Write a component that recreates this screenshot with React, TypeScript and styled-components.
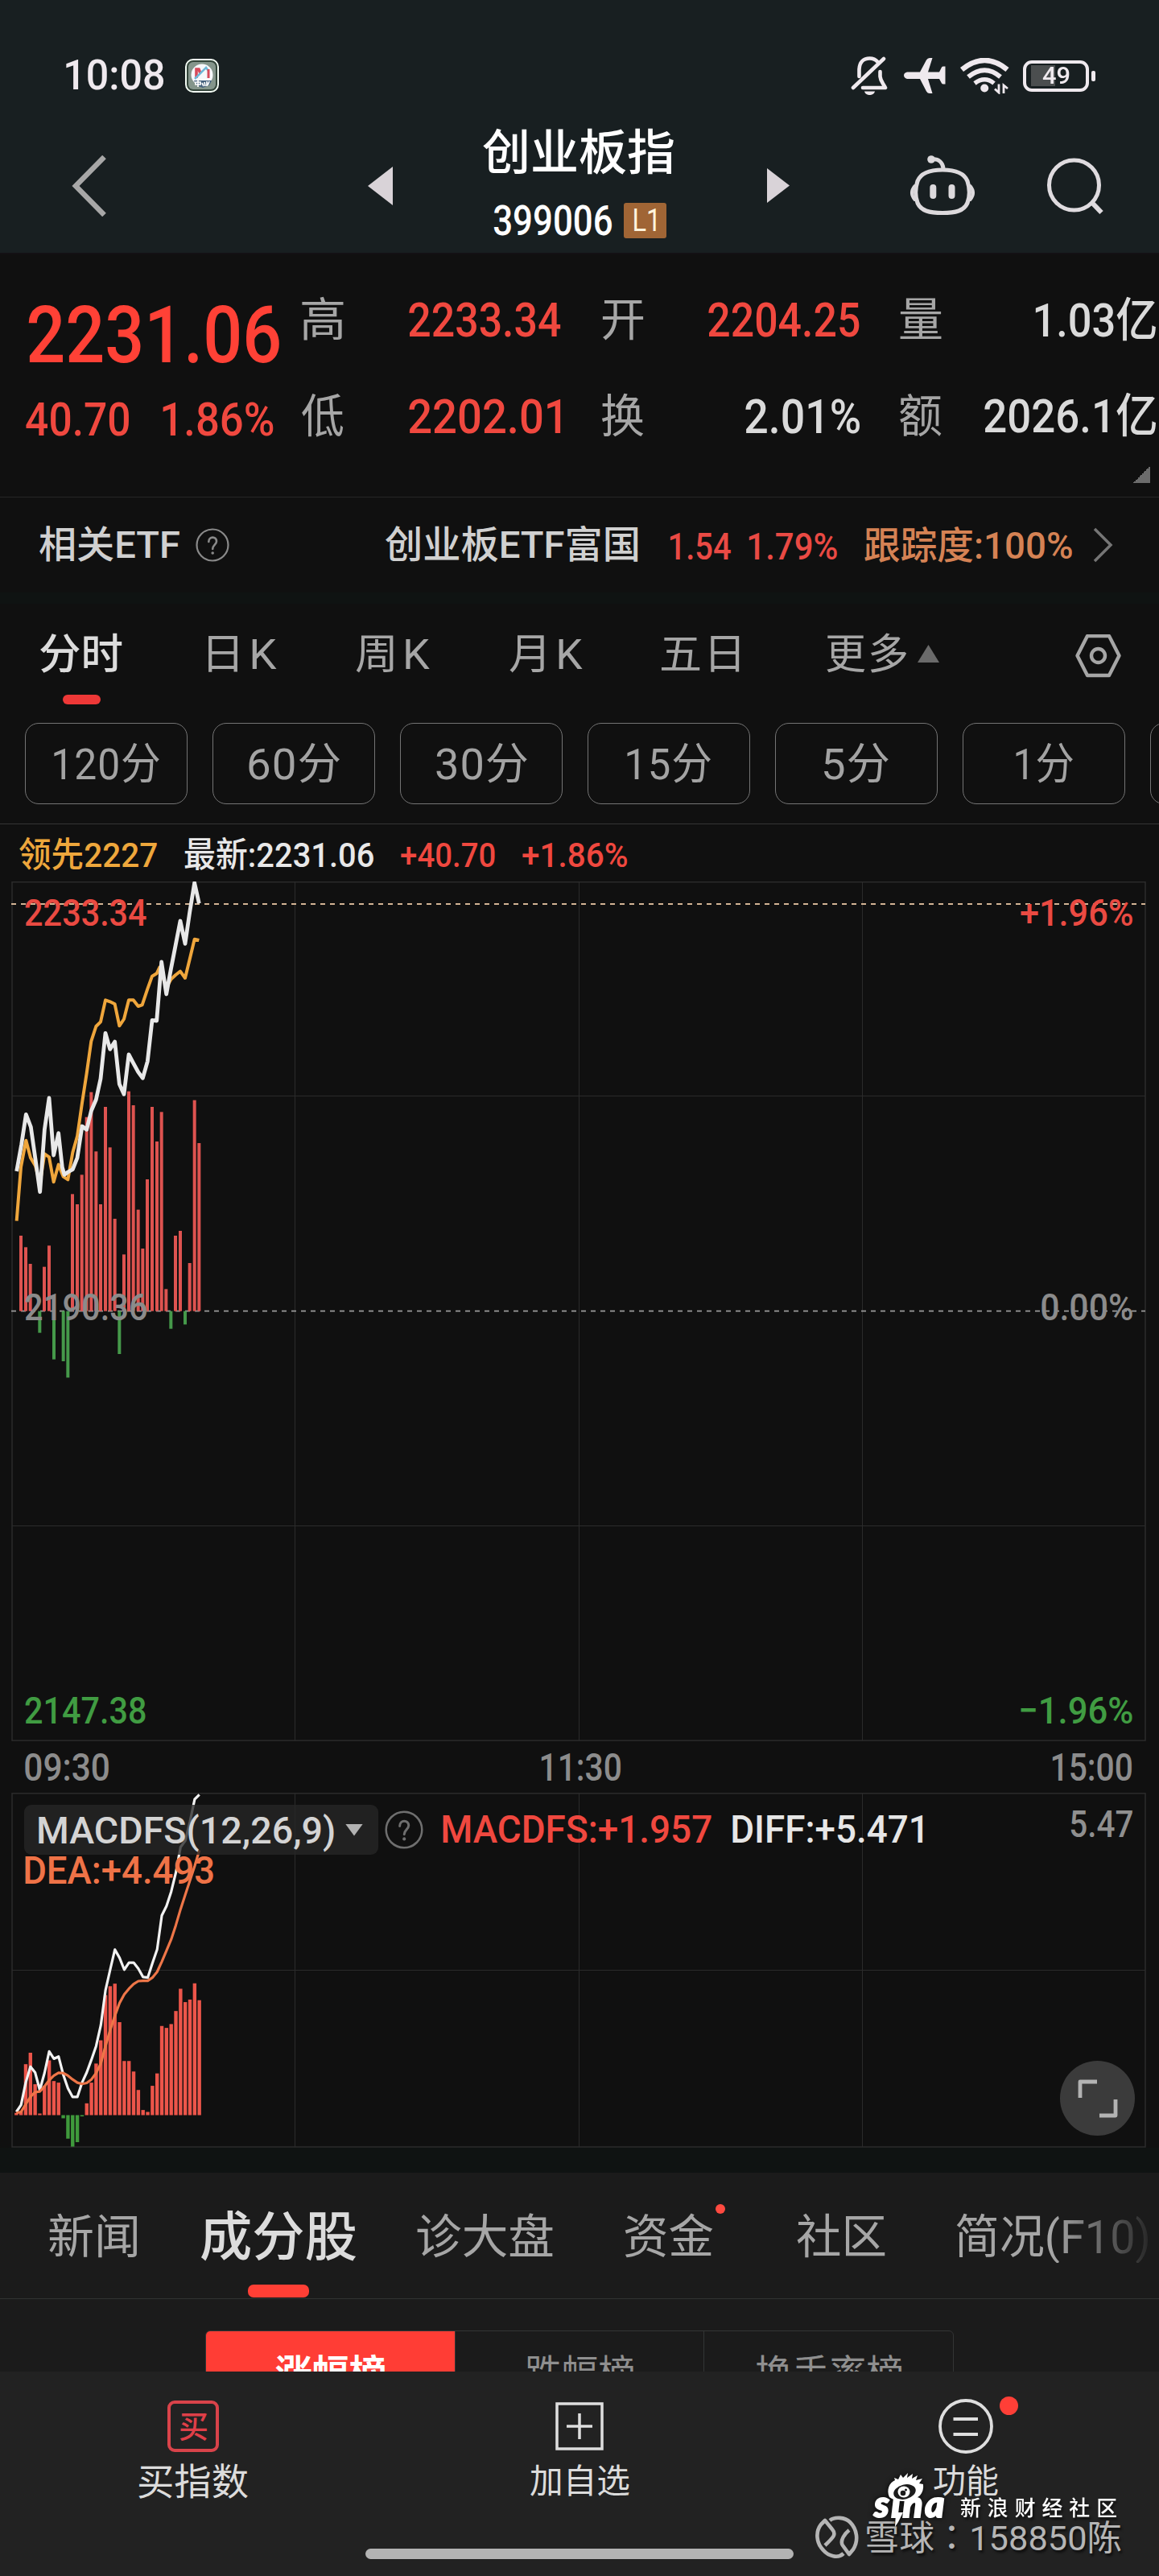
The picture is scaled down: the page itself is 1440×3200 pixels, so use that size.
import React, { useLayoutEffect, useRef, useState } from "react";
import styled, { createGlobalStyle } from "styled-components";

const FONT = 'Roboto, "Noto Sans CJK SC", sans-serif';
const FONT_TC = 'Roboto, "Noto Sans CJK TC", sans-serif';

const Global = createGlobalStyle`
  * { box-sizing: border-box; }
  html, body { margin: 0; padding: 0; background: #101010; }
  body { width: 1440px; overflow-x: hidden; font-family: ${FONT}; }
  svg { display: block; flex: none; }
`;

/* ---------- text that fills an exact ink width ---------- */

type TextProps = {
  w: number;
  size: number;
  color?: string;
  weight?: number;
  ml?: number;
  mt?: number;
  spacing?: number;
  line?: number;
  shadow?: boolean;
  family?: string;
  children: string;
};

const TextBox = styled.span<{ $w: number; $ml: number; $mt: number; $line: number }>`
  display: block;
  flex: none;
  width: ${(p) => p.$w}px;
  height: ${(p) => p.$line}px;
  margin-left: ${(p) => p.$ml}px;
  margin-top: ${(p) => p.$mt}px;
`;

const TextInk = styled.span<{
  $size: number;
  $color: string;
  $weight: number;
  $spacing: number;
  $line: number;
  $shadow: boolean;
  $family: string;
}>`
  display: inline-block;
  vertical-align: top;
  transform-origin: 0 50%;
  white-space: nowrap;
  font-family: ${(p) => p.$family};
  font-size: ${(p) => p.$size}px;
  font-weight: ${(p) => p.$weight};
  line-height: ${(p) => p.$line}px;
  letter-spacing: ${(p) => p.$spacing}px;
  color: ${(p) => p.$color};
  text-shadow: ${(p) => (p.$shadow ? "2px 3px 3px rgba(0,0,0,.6)" : "none")};
`;

function Text({
  w, size, color = "#d0d0d0", weight = 400, ml = 0, mt = 0, spacing = 0, line, shadow = false, family = FONT, children,
}: TextProps) {
  const ref = useRef<HTMLSpanElement>(null);
  const [fit, setFit] = useState("none");
  useLayoutEffect(() => {
    const ctx = document.createElement("canvas").getContext("2d") as any;
    if (!ctx || !ref.current) return;
    ctx.font = `${weight} ${size}px ${family}`;
    ctx.letterSpacing = `${spacing}px`;
    const m = ctx.measureText(children);
    const scale = w / (m.actualBoundingBoxLeft + m.actualBoundingBoxRight);
    setFit(`translateX(${m.actualBoundingBoxLeft * scale}px) scaleX(${scale})`);
  }, [w, size, weight, spacing, family, children]);
  const lh = line ?? size;
  return (
    <TextBox $w={w} $ml={ml} $mt={mt} $line={lh}>
      <TextInk
        ref={ref}
        $size={size}
        $color={color}
        $weight={weight}
        $spacing={spacing}
        $line={lh}
        $shadow={shadow}
        $family={family}
        style={{ transform: fit }}
      >
        {children}
      </TextInk>
    </TextBox>
  );
}

/* ---------- page ---------- */

const Page = styled.main`
  position: relative;
  width: 1440px;
  height: 3200px;
  overflow: hidden;
  background: #101010;
  display: flex;
  flex-direction: column;
`;

const Header = styled.header`
  height: 314px;
  flex: none;
  background: #181f21;
`;

const StatusBar = styled.div`
  display: flex;
  align-items: center;
  height: 124px;
  padding: 64px 79px 0 82px;
`;

const AppBadge = styled.div`
  width: 42px;
  height: 42px;
  margin-left: 27px;
`;

const StatusIcons = styled.div`
  display: flex;
  align-items: center;
  margin-left: auto;
`;

const Battery = styled.div`
  display: flex;
  align-items: center;
  margin-left: 17px;
`;

const BatteryShell = styled.div`
  display: flex;
  align-items: center;
  justify-content: center;
  width: 82px;
  height: 39px;
  border: 4px solid #efe9ee;
  border-radius: 11px;
  background: linear-gradient(#4b4e4f, #4b4e4f) 6px center / 30px 26px no-repeat;
`;

const BatteryTip = styled.div`
  width: 5px;
  height: 13px;
  margin-left: 3px;
  border-radius: 2px;
  background: #efe9ee;
`;

const Nav = styled.nav`
  display: flex;
  align-items: center;
  height: 190px;
  padding-top: 23px;
`;

const Gap = styled.div<{ $w: number }>`
  flex: none;
  width: ${(p) => p.$w}px;
`;

const TitleColumn = styled.div`
  align-self: flex-start;
  width: 240px;
  padding-top: 9px;
`;

const CodeRow = styled.div`
  display: flex;
  align-items: center;
  height: 50px;
  margin-top: 23px;
`;

const LevelBadge = styled.div`
  display: flex;
  align-items: center;
  justify-content: center;
  width: 53px;
  height: 44px;
  margin-left: 15px;
  border-radius: 3px;
  background: #a06535;
`;

/* ---------- quote ---------- */

const Quote = styled.section`
  display: flex;
  height: 304px;
  flex: none;
  border-bottom: 1px solid #262626;
  border-top: 2px solid #131114;
`;

const PriceColumn = styled.div`
  width: 375px;
  padding: 51px 0 0 32px;
`;

const ChangeRow = styled.div`
  display: flex;
  align-items: center;
  height: 60px;
  margin-top: 24px;
`;

const StatsColumn = styled.div`
  width: 1061px;
  padding-top: 22px;
`;

const StatsRow = styled.div`
  display: flex;
  justify-content: space-between;
  align-items: center;
  height: 119.5px;
`;

const Stat = styled.div<{ $w: number }>`
  display: flex;
  justify-content: space-between;
  align-items: center;
  width: ${(p) => p.$w}px;
`;

const ExpandCorner = styled.div`
  width: 21px;
  height: 21px;
  margin: 2px 7px 0 auto;
  background: linear-gradient(to bottom right, transparent 50%, #6c6c6c 50%);
`;

const EtfRow = styled.section`
  display: flex;
  align-items: center;
  height: 118px;
  flex: none;
`;

const Band = styled.div<{ $h: number }>`
  height: ${(p) => p.$h}px;
  flex: none;
  background: #0f1312;
`;

/* ---------- period tabs ---------- */

const PeriodTabs = styled.div`
  display: flex;
  align-items: flex-start;
  height: 148px;
  flex: none;
  padding: 38px 0 0 50px;
`;

const Tab = styled.div<{ $ml: number }>`
  position: relative;
  display: flex;
  flex-direction: column;
  align-items: center;
  margin-left: ${(p) => p.$ml}px;
`;

const Underline = styled.div<{ $w: number; $h: number; $mt: number; $color: string }>`
  width: ${(p) => p.$w}px;
  height: ${(p) => p.$h}px;
  margin-top: ${(p) => p.$mt}px;
  border-radius: 7px;
  background: ${(p) => p.$color};
`;

const MoreArrow = styled.div`
  width: 27px;
  height: 22px;
  margin: 13px 0 0 13px;
  background: #6a6a6a;
  clip-path: polygon(50% 0, 100% 100%, 0 100%);
`;

const Chips = styled.div`
  display: flex;
  gap: 31px;
  height: 126px;
  flex: none;
  padding-left: 31px;
  overflow: hidden;
  border-bottom: 1px solid #353535;
`;

const Chip = styled.div`
  display: flex;
  align-items: center;
  justify-content: center;
  flex: none;
  width: 202px;
  height: 101px;
  border: 1px solid #747474;
  border-radius: 17px;
`;

const InfoRow = styled.div`
  display: flex;
  align-items: center;
  height: 71px;
  flex: none;
  padding: 5px 0 0 24px;
`;

/* ---------- charts ---------- */

const Plot = styled.div<{ $h: number }>`
  display: grid;
  width: 1410px;
  height: ${(p) => p.$h}px;
  flex: none;
  margin-left: 14px;
  & > * { grid-area: 1 / 1; }
`;

const PlotLabels = styled.div<{ $pt: number }>`
  z-index: 1;
  padding: ${(p) => p.$pt}px 17px 0 17px;
`;

const PlotRow = styled.div<{ $mt?: number; $h: number }>`
  display: flex;
  align-items: center;
  justify-content: space-between;
  height: ${(p) => p.$h}px;
  margin-top: ${(p) => p.$mt ?? 0}px;
`;

const TimeAxis = styled.div`
  display: flex;
  align-items: center;
  justify-content: space-between;
  height: 64px;
  flex: none;
  padding: 1px 34px 0 31px;
`;

const IndicatorRow = styled.div`
  display: flex;
  align-items: center;
  height: 62px;
  margin-left: -1px;
`;

const IndicatorPill = styled.div`
  display: flex;
  align-items: center;
  width: 440px;
  height: 62px;
  border-radius: 9px;
  background: rgba(38, 38, 38, 0.78);
`;

const DropArrow = styled.div`
  width: 22px;
  height: 15px;
  margin-left: 14px;
  background: #b2b2b2;
  clip-path: polygon(0 0, 100% 0, 50% 100%);
`;

const FullScreenButton = styled.div`
  display: flex;
  align-items: center;
  justify-content: center;
  width: 93px;
  height: 93px;
  margin: 216px -3px 0 auto;
  border-radius: 50%;
  background: #3b3b3b;
`;

/* ---------- lower panels ---------- */

const SectionTabs = styled.div`
  display: flex;
  align-items: flex-start;
  height: 157px;
  flex: none;
  padding: 48px 0 0 61px;
  background: #1b1b1b;
  border-bottom: 1px solid #303332;
`;

const Fade = styled.div`
  mask-image: linear-gradient(90deg, #000 50%, rgba(0, 0, 0, 0.1) 100%);
`;

const SmallDot = styled.div`
  position: absolute;
  left: 113px;
  top: -9px;
  width: 12px;
  height: 12px;
  border-radius: 50%;
  background: #ff4a40;
`;

const RankArea = styled.div`
  height: 90px;
  flex: none;
  overflow: hidden;
  padding: 39px 0 0 255px;
  background: #1b1b1b;
`;

const RankTabs = styled.div`
  display: flex;
  width: 930px;
  height: 90px;
  border: 1px solid #333535;
  border-radius: 6px;
  overflow: hidden;
`;

const RankTab = styled.div<{ $active?: boolean }>`
  display: flex;
  justify-content: center;
  flex: 1;
  padding-top: 29px;
  background: ${(p) => (p.$active ? "#ff3d35" : "transparent")};
  & + & { border-left: 1px solid #333535; }
`;

const BottomBar = styled.footer`
  height: 254px;
  flex: none;
  background: #222222;
`;

const Actions = styled.div`
  display: grid;
  grid-template-columns: repeat(3, 480px);
  height: 162px;
  padding-top: 33px;
`;

const Action = styled.div`
  position: relative;
  display: flex;
  flex-direction: column;
  align-items: center;
`;

const IconSlot = styled.div`
  display: flex;
  align-items: center;
  justify-content: center;
  height: 70px;
  margin-bottom: 11px;
`;

const BuyIcon = styled.div`
  display: flex;
  align-items: center;
  justify-content: center;
  width: 64px;
  height: 64px;
  border: 4px solid #d9434a;
  border-radius: 9px;
`;

const ActionDot = styled.div`
  position: absolute;
  left: 282px;
  top: -2px;
  width: 23px;
  height: 23px;
  border-radius: 50%;
  background: #ff3f37;
`;

const HomeBar = styled.div`
  width: 532px;
  height: 13px;
  margin: 58px auto 0;
  border-radius: 7px;
  background: #b3b3b3;
`;

const SinaMark = styled.div`
  position: absolute;
  left: 1085px;
  top: 3069px;
  display: flex;
  align-items: flex-start;
`;

const SinaLogo = styled.div`
  display: grid;
  width: 96px;
  height: 72px;
  filter: drop-shadow(0 0 3px rgba(0, 0, 0, 0.8));
  & > * { grid-area: 1 / 1; }
`;

const SinaWord = styled.span`
  margin: 15px 0 0 1px;
  font: italic 900 46px/52px Lato, sans-serif;
  letter-spacing: 2.6px;
  color: #fff;
  -webkit-text-stroke: 2px #fff;
`;

const XueqiuMark = styled.div`
  position: absolute;
  left: 1013px;
  top: 3125px;
  display: flex;
  align-items: center;
  height: 54px;
`;

/* ---------- icons ---------- */

const light = "#efe9ee";

const AppIcon = () => (
  <svg width="42" height="42" viewBox="0 0 42 42">
    <rect x="1" y="1" width="40" height="40" rx="9" fill="#33453a" stroke="#f2fbf3" strokeWidth="2" />
    <rect x="4" y="4" width="34" height="34" rx="6" fill="#84958b" />
    <circle cx="21" cy="20" r="13.5" fill="#f6f8fb" />
    <path d="M14 24V13h3l2 5" fill="none" stroke="#d64a5b" strokeWidth="3.600" />
    <path d="M12 25L26 11l3 4" fill="none" stroke="#6fb7d8" strokeWidth="2.5" />
    <path d="M29 13v11" stroke="#d64a5b" strokeWidth="3" />
    <path d="M11 27h22l-3 6-8 3-8-3z" fill="#44607c" />
    <path d="M13 29h6v3h-6zM16 27v8M21 30l2 4M24 29l1 5M27 28v6M30 28l-2 5" stroke="#fff" strokeWidth="1.7" fill="none" />
  </svg>
);

const BellOff = () => (
  <svg width="46" height="50" viewBox="1058 69 46 50" fill="none" stroke={light} strokeWidth="4.6" strokeLinecap="round" strokeLinejoin="round">
    <path d="M1068.500 95V86C1069 77 1074 72.500 1081.500 72.500C1086 72.500 1089 74 1091.500 77" />
    <path d="M1094.500 89V95C1095 101 1098 103 1101 109H1073" />
    <path d="M1099 73L1061 109" />
    <path d="M1075 113.500H1088C1087 117 1084 118 1081.500 118C1079 118 1076 117 1075 113.500Z" fill={light} stroke="none" />
  </svg>
);

const Plane = () => (
  <svg width="52" height="46" viewBox="1124 70.500 52 46" fill={light}>
    <path d="M1128 89H1144L1152 74Q1153.500 71.500 1156 71.500H1159.500L1154 89H1168L1171 83Q1171.600 82 1173 82H1175.500V104H1173Q1171.600 104 1171 103L1168 97.500H1154L1159.500 115.500H1156Q1153.500 115.500 1152 113L1144 97.500H1128Q1124 96 1124 93.200Q1124 90 1128 89Z" />
  </svg>
);

const Wifi = () => (
  <svg width="61" height="45" viewBox="1193.500 72 61 45" fill="none" stroke={light}>
    <path d="M1195.500 86.500Q1224 63.500 1252 86.500" strokeWidth="6.500" />
    <path d="M1203.500 95.500Q1224 79 1243.500 95.500" strokeWidth="5.800" />
    <path d="M1211.500 103.500Q1224 94 1235.500 103.500" strokeWidth="5.400" />
    <circle cx="1223.700" cy="109.500" r="5" fill={light} stroke="none" />
    <path d="M1241.500 104.500V115L1236.500 110.500M1247.500 116V106L1252.500 110" strokeWidth="2.800" />
  </svg>
);

const Robot = () => (
  <svg width="82" height="78" viewBox="1130 191 82 78" fill="none" stroke="#dcd9dc" strokeLinecap="round">
    <path d="M1171 210C1186 210 1198 214 1202 224C1205 233 1205 243 1202 251C1198 261 1187 263.500 1171 263.500C1155 263.500 1144 261 1140 251C1137 243 1137 233 1140 224C1144 214 1156 210 1171 210Z" strokeWidth="5.200" />
    <path d="M1136.500 230Q1129.500 238.500 1136.500 247M1205.500 230Q1212.500 238.500 1205.500 247" strokeWidth="4" />
    <path d="M1159.300 232V242M1182.500 232V242" strokeWidth="8" />
    <path d="M1158 197C1166 196 1171 201 1172 208" strokeWidth="5" />
    <circle cx="1157" cy="197" r="4.800" fill="#dcd9dc" stroke="none" />
  </svg>
);

const Help = ({ size, color }: { size: number; color: string }) => (
  <svg width={size} height={size} viewBox="0 0 42 42" fill="none" stroke={color} strokeLinecap="round">
    <circle cx="21" cy="21" r="19.500" strokeWidth="2.200" />
    <path d="M16.300 17C16.300 9.800 26.200 10 26 16.500C26 20.500 21.200 21 21.200 26" strokeWidth="2.600" />
    <circle cx="21.200" cy="31" r="1.800" fill={color} stroke="none" />
  </svg>
);

const SinaEye = () => (
  <svg width="96" height="72" viewBox="0 0 96 72">
    <path d="M20 33C16 24 20 15 27 12L26 9L31 11L34 5L37 9L43 3L42 9L49 4L48 10L55 6L53 12L61 10L57 16L62 17Q63 25 58 31Q50 38 38 38Q26 38 20 33Z" fill="#fff" />
    <ellipse cx="39" cy="26.500" rx="14" ry="9" fill="#1c1c1c" transform="rotate(-14 39 26.500)" />
    <ellipse cx="38" cy="26.500" rx="7.500" ry="7" fill="#fff" />
    <circle cx="37" cy="28" r="3.300" fill="#1c1c1c" />
    <circle cx="40.500" cy="24" r="1.500" fill="#1c1c1c" />
    <path d="M28 52L37 52L31 64L27 70Z" fill="#fff" />
  </svg>
);

const XueqiuLogo = () => (
  <svg width="54" height="54" viewBox="0 0 54 54" fill="none" stroke="#b5b5b5" strokeWidth="4.600" strokeLinejoin="round">
    <path d="M18 6C24 1 37 2 43 8C52 17 54 31 47 42L42 48L34 37C30 31 37 22 42 18" />
    <path d="M35 47C28 54 16 50 10 43C1 34 0 20 7 11L12 6L21 17C27 24 21 28 12 37" />
  </svg>
);

/* ---------- chart data ---------- */

const pricePoints: [number, number][] = [
  [62, 1155], [80, 1055], [97, 943], [115, 990], [132, 1110], [149, 1232], [166, 1000], [183, 882], [200, 1095],
  [218, 1013], [232, 1140], [240, 1168], [253, 1158], [271, 1148], [288, 1105], [306, 987], [323, 1000], [340, 930],
  [358, 888], [375, 810], [393, 640], [410, 700], [428, 672], [445, 830], [462, 868], [480, 720], [497, 752],
  [515, 785], [532, 808], [550, 745], [567, 592], [584, 594], [602, 375], [620, 495], [637, 402], [655, 310],
  [672, 222], [690, 307], [707, 190], [725, 80], [742, 157],
];

const leadPoints: [number, number][] = [
  [62, 1340], [78, 1140], [97, 1040], [114, 1105], [132, 1135], [149, 1200], [166, 1090], [183, 1102], [200, 1195],
  [218, 1130], [236, 1175], [253, 1186], [271, 1085], [288, 1025], [306, 900], [323, 790], [340, 670], [358, 615],
  [375, 598], [393, 517], [410, 523], [428, 532], [445, 613], [462, 588], [480, 517], [497, 517], [515, 540],
  [530, 535], [550, 475], [567, 428], [584, 418], [595, 395], [620, 470], [637, 440], [655, 423], [672, 410],
  [690, 435], [707, 365], [725, 290], [742, 294],
];

const volumeBars: [number, number][] = [
  [78, 555], [96, 598], [113, 660], [148, 917], [165, 671], [183, 592], [201, 1016], [236, 1023], [253, 1084],
  [270, 400], [288, 438], [305, 328], [323, 113], [340, 20], [358, 241], [375, 438], [393, 75], [410, 226],
  [428, 492], [445, 996], [462, 625], [480, 17], [497, 69], [515, 458], [532, 603], [549, 345], [567, 75],
  [585, 204], [602, 94], [619, 754], [637, 902], [654, 555], [672, 537], [690, 886], [707, 657], [725, 50], [742, 210],
];

const macdBars = [
  1375, 1370, 1222, 1186, 1285, 1377, 1290, 1210, 1275, 1280, 1392, 1456, 1481, 1467, 1386, 1345, 1280, 1220, 1147,
  1005, 977, 969, 1090, 1212, 1212, 1245, 1303, 1366, 1372, 1290, 1251, 1102, 1108, 1096, 1055, 985, 1027, 1019, 968, 1021,
];

const diffLine = [
  1372, 1350, 1280, 1230, 1248, 1303, 1250, 1182, 1205, 1198, 1255, 1298, 1325, 1325, 1280, 1248, 1208, 1165, 1100,
  990, 925, 862, 888, 925, 903, 903, 922, 948, 950, 905, 862, 755, 725, 680, 620, 540, 520, 460, 390, 375,
];

const deaLine = [
  1375, 1372, 1348, 1325, 1310, 1308, 1292, 1272, 1258, 1249, 1250, 1258, 1270, 1280, 1284, 1281, 1270, 1250, 1220,
  1165, 1115, 1070, 1030, 1003, 985, 970, 961, 960, 960, 950, 932, 900, 865, 830, 785, 735, 690, 645, 600, 550,
];

const toPrice = (pts: [number, number][]) => pts.map(([x, y]) => `${x / 3},${1070 + y / 3}`).join(" ");
const macdX = (i: number) => 20.3 + i * 5.83;
const macdY = (v: number) => 2080 + v / 2.529;
const toMacd = (vals: number[]) => vals.map((v, i) => `${macdX(i)},${macdY(v)}`).join(" ");

const GRID = "#2b2b2b";

const PriceChart = () => (
  <svg width="1410" height="1068" viewBox="14 1095 1410 1068" fill="none">
    <rect x="15" y="1095.700" width="1408" height="1066.500" stroke={GRID} strokeWidth="1.500" />
    <path d="M366.500 1095V2162M719.500 1095V2162M1071.500 1095V2162M15 1361.500H1423M15 1895.500H1423" stroke={GRID} />
    <path d="M14 1123H1423" stroke="#d3b494" strokeWidth="2" strokeDasharray="6 6" />
    <path d="M14 1628.700H1423" stroke="#9a9a9a" strokeWidth="1.800" strokeDasharray="6 6" />
    {volumeBars.map(([x, y]) => {
      const top = 1350 + y / 3;
      return (
        <rect
          key={x}
          x={x / 3 - 2}
          y={Math.min(top, 1628.7)}
          width="4"
          height={Math.abs(1628.7 - top)}
          fill={y > 836 ? "#45994a" : "#de5350"}
        />
      );
    })}
    <polyline points={toPrice(leadPoints)} stroke="#efa63c" strokeWidth="4" strokeLinejoin="round" />
    <polyline points={toPrice(pricePoints)} stroke="#e8e8e8" strokeWidth="4.800" strokeLinejoin="round" />
  </svg>
);

const MacdChart = () => (
  <svg width="1410" height="441" viewBox="14 2226 1410 441" fill="none">
    <rect x="15" y="2226.800" width="1408" height="439.200" stroke={GRID} strokeWidth="1.500" />
    <path d="M366.500 2227V2666M719.500 2227V2666M1071.500 2227V2666M15 2446.500H1423" stroke={GRID} />
    {macdBars.map((v, i) => (
      <rect
        key={i}
        x={macdX(i) - 2.2}
        y={Math.min(macdY(v), 2626.5)}
        width="4.400"
        height={Math.abs(2626.5 - macdY(v))}
        fill={v > 1382 ? "#3f9a3c" : "#ec554a"}
      />
    ))}
    <polyline points={toMacd(diffLine)} stroke="#f2f2f2" strokeWidth="3.200" strokeLinejoin="round" />
    <polyline points={toMacd(deaLine)} stroke="#ee7648" strokeWidth="3.200" strokeLinejoin="round" />
  </svg>
);

const RED = "#f0483f";
const MUTED = "#a6a6a6";

const chips: [string, number][] = [
  ["120分", 131], ["60分", 113], ["30分", 113], ["15分", 104], ["5分", 80], ["1分", 71],
];

export default function App() {
  return (
    <Page>
      <Global />
      <Header>
        <StatusBar>
          <Text w={121} size={52} weight={500} color={light}>10:08</Text>
          <AppBadge><AppIcon /></AppBadge>
          <StatusIcons>
            <BellOff />
            <Gap $w={20} />
            <Plane />
            <Gap $w={18} />
            <Wifi />
            <Battery>
              <BatteryShell>
                <Text w={34} size={30} weight={500} color={light}>49</Text>
              </BatteryShell>
              <BatteryTip />
            </Battery>
          </StatusIcons>
        </StatusBar>
        <Nav>
          <Gap $w={88} />
          <svg width="46" height="76" viewBox="0 0 46 76">
            <path d="M41.500 2L6 38L41.500 74" fill="none" stroke="#a7a7a7" strokeWidth="6.500" />
          </svg>
          <Gap $w={323} />
          <svg width="31" height="48" viewBox="0 0 31 48"><path d="M31 0V48L0 24Z" fill="#d9d3d8" /></svg>
          <Gap $w={110} />
          <TitleColumn>
            <Text w={237} ml={2} size={60} line={70} weight={500} color="#fff">创业板指</Text>
            <CodeRow>
              <Text w={147} ml={15} size={51} weight={500} color="#fff">399006</Text>
              <LevelBadge><Text w={27} size={38} color="#fff4dc">L1</Text></LevelBadge>
            </CodeRow>
          </TitleColumn>
          <Gap $w={115} />
          <svg width="28" height="43" viewBox="0 0 28 43"><path d="M0 0V43L28 21.500Z" fill="#d9d3d8" /></svg>
          <Gap $w={149} />
          <Robot />
          <Gap $w={88} />
          <svg width="72" height="72" viewBox="0 0 72 72" fill="none" stroke="#dfdbdf" strokeWidth="5">
            <circle cx="34.500" cy="35" r="31" />
            <path d="M57 57L68.500 69" strokeWidth="6" />
          </svg>
        </Nav>
      </Header>

      <Quote>
        <PriceColumn>
          <Text w={312} ml={3} size={98} line={100} weight={500} color="#ff4136">2231.06</Text>
          <ChangeRow>
            <Text w={128} size={58} weight={500} color={RED}>40.70</Text>
            <Text w={138} ml={42} size={58} weight={500} color={RED}>1.86%</Text>
          </ChangeRow>
        </PriceColumn>
        <StatsColumn>
          <StatsRow>
            <Stat $w={322}>
              <Text w={52} size={57} color={MUTED}>高</Text>
              <Text w={189} size={59} weight={500} color={RED}>2233.34</Text>
            </Stat>
            <Stat $w={320}>
              <Text w={52} size={57} color={MUTED}>开</Text>
              <Text w={188} size={59} weight={500} color={RED}>2204.25</Text>
            </Stat>
            <Stat $w={318}>
              <Text w={52} size={57} color={MUTED}>量</Text>
              <Text w={150} size={58} weight={500} color="#dadada">1.03亿</Text>
            </Stat>
          </StatsRow>
          <StatsRow>
            <Stat $w={322}>
              <Text w={52} size={57} color={MUTED}>低</Text>
              <Text w={189} size={59} weight={500} color={RED}>2202.01</Text>
            </Stat>
            <Stat $w={320}>
              <Text w={52} size={57} color={MUTED}>换</Text>
              <Text w={142} size={59} weight={500} color="#dadada">2.01%</Text>
            </Stat>
            <Stat $w={318}>
              <Text w={52} size={57} color={MUTED}>额</Text>
              <Text w={213} size={58} weight={500} color="#dadada">2026.1亿</Text>
            </Stat>
          </StatsRow>
          <ExpandCorner />
        </StatsColumn>
      </Quote>

      <EtfRow>
        <Text w={174} ml={49} size={47} weight={500} mt={-1}>相关ETF</Text>
        <Gap $w={20} />
        <Help size={42} color="#8a8a8a" />
        <Text w={314} ml={194} mt={-1} size={47} weight={500}>创业板ETF富国</Text>
        <Text w={76} ml={39} size={47} mt={2} weight={500} color="#ea4a44">1.54</Text>
        <Text w={110} ml={22} size={47} mt={2} weight={500} color="#ea4a44">1.79%</Text>
        <Text w={258} ml={34} size={47} mt={0} weight={500} color="#d58254">跟踪度:100%</Text>
        <Gap $w={26} />
        <svg width="26" height="44" viewBox="0 0 26 44">
          <path d="M2 2L22 22L2 42" fill="none" stroke="#757575" strokeWidth="3.500" />
        </svg>
      </EtfRow>
      <Band $h={14} />

      <PeriodTabs>
        <Tab $ml={0}>
          <Text w={102} size={52} weight={500} color="#dcdcdc">分时</Text>
          <Underline $w={47} $h={12} $mt={23} $color="#ee3837" />
        </Tab>
        <Tab $ml={107}><Text w={85} size={52} spacing={5} color={MUTED}>日K</Text></Tab>
        <Tab $ml={98}><Text w={92} size={52} spacing={5} color={MUTED}>周K</Text></Tab>
        <Tab $ml={99}><Text w={91} size={52} spacing={5} color={MUTED}>月K</Text></Tab>
        <Tab $ml={97}><Text w={98} size={52} spacing={2} color={MUTED}>五日</Text></Tab>
        <Tab $ml={108}><Text w={100} size={52} spacing={2} color={MUTED}>更多</Text></Tab>
        <MoreArrow />
        <Gap $w={169} />
        <svg width="57" height="54" viewBox="0 1 57 54" fill="none" stroke={MUTED} strokeLinejoin="round">
          <path d="M15 3H42L54.500 27.500L42 52H15L2.500 27.500Z" strokeWidth="4.400" />
          <circle cx="28.500" cy="27.500" r="8.500" strokeWidth="4.400" />
        </svg>
      </PeriodTabs>

      <Chips>
        {chips.map(([label, w]) => (
          <Chip key={label}><Text w={w} size={54} mt={3} spacing={1} color="#a3a3a3">{label}</Text></Chip>
        ))}
        <Chip />
      </Chips>

      <InfoRow>
        <Text w={171} size={43} weight={500} color="#eea73c">领先2227</Text>
        <Text w={235} ml={34} size={43} weight={500} color="#e8e8e8">最新:2231.06</Text>
        <Text w={117} ml={34} size={43} weight={500} color={RED}>+40.70</Text>
        <Text w={130} ml={34} size={43} weight={500} color={RED}>+1.86%</Text>
      </InfoRow>

      <Plot $h={1068}>
        <PriceChart />
        <PlotLabels $pt={14}>
          <PlotRow $h={48}>
            <Text w={151} size={47} weight={500} color="#ea4a42">2233.34</Text>
            <Text w={139} size={47} weight={500} color="#ea4a42">+1.96%</Text>
          </PlotRow>
          <PlotRow $h={48} $mt={442}>
            <Text w={151} size={47} weight={500} color="#8b8b8b">2190.36</Text>
            <Text w={113} size={47} weight={500} color="#8b8b8b">0.00%</Text>
          </PlotRow>
          <PlotRow $h={48} $mt={453}>
            <Text w={150} size={47} weight={500} color="#409c42">2147.38</Text>
            <Text w={139} size={47} weight={500} color="#409c42">−1.96%</Text>
          </PlotRow>
        </PlotLabels>
      </Plot>
      <TimeAxis>
        <Text w={104} size={48} weight={500} color="#8c8c8c">09:30</Text>
        <Text w={99} size={48} weight={500} color="#8c8c8c">11:30</Text>
        <Text w={99} size={48} weight={500} color="#8c8c8c">15:00</Text>
      </TimeAxis>
      <Plot $h={441}>
        <MacdChart />
        <PlotLabels $pt={15}>
          <IndicatorRow>
            <IndicatorPill>
              <Text w={367} ml={18} size={47} mt={1} weight={500} color="#d4d4d4">MACDFS(12,26,9)</Text>
              <DropArrow />
            </IndicatorPill>
            <Gap $w={8} />
            <Help size={48} color="#6f6f6f" />
            <Text w={334} ml={24} size={48} weight={500} color={RED}>MACDFS:+1.957</Text>
            <Text w={236} ml={26} size={48} weight={500} color="#e6e6e6">DIFF:+5.471</Text>
            <Text w={77} ml={184} mt={-15} size={47} weight={500} color="#8f8f8f">5.47</Text>
          </IndicatorRow>
          <Text w={234} size={48} line={40} weight={500} color="#ef7347">DEA:+4.493</Text>
          <FullScreenButton>
            <svg width="50" height="48" viewBox="0 0 50 48" fill="none" stroke="#b3b3b3" strokeWidth="4.800" strokeLinejoin="round">
              <path d="M3 23V3H24M27 45H47V25" />
            </svg>
          </FullScreenButton>
        </PlotLabels>
      </Plot>
      <Band $h={31} />

      <SectionTabs>
        <Tab $ml={0}><Text w={109} size={58} line={64} color={MUTED}>新闻</Text></Tab>
        <Tab $ml={80}>
          <Text w={192} size={66} weight={500} color="#dcdcdc">成分股</Text>
          <Underline $w={76} $h={16} $mt={25} $color="#ff3f35" />
        </Tab>
        <Tab $ml={76}><Text w={169} size={58} line={64} color={MUTED}>诊大盘</Text></Tab>
        <Tab $ml={89}>
          <Text w={110} size={58} line={64} color={MUTED}>资金</Text>
          <SmallDot />
        </Tab>
        <Tab $ml={104}><Text w={110} size={58} line={64} color={MUTED}>社区</Text></Tab>
        <Tab $ml={88}><Fade><Text w={239} size={58} line={64} color={MUTED}>简况(F10)</Text></Fade></Tab>
      </SectionTabs>
      <RankArea>
        <RankTabs>
          <RankTab $active><Text w={137} size={46} weight={700} color="#fff">涨幅榜</Text></RankTab>
          <RankTab><Text w={134} size={46} color="#8f8f8f">跌幅榜</Text></RankTab>
          <RankTab><Text w={181} size={46} color="#8f8f8f">换手率榜</Text></RankTab>
        </RankTabs>
      </RankArea>

      <BottomBar>
        <Actions>
          <Action>
            <IconSlot>
              <BuyIcon><Text w={34} size={38} mt={1} weight={500} color="#df3f48">买</Text></BuyIcon>
            </IconSlot>
            <Text w={136} size={46} color="#dcdcdc">买指数</Text>
          </Action>
          <Action>
            <IconSlot>
              <svg width="60" height="60" viewBox="0 0 60 60" fill="none" stroke="#dedede" strokeWidth="3.500">
                <path d="M2 2H58V58H2ZM14 30H46M30 14V46" />
              </svg>
            </IconSlot>
            <Text w={123} size={42} line={46} color="#dcdcdc">加自选</Text>
          </Action>
          <Action>
            <IconSlot>
              <svg width="68" height="70" viewBox="0 0 68 70" fill="none" stroke="#dedede" strokeWidth="3.800">
                <circle cx="34" cy="35" r="32" />
                <path d="M18.500 26H49M18.500 45H49" />
              </svg>
            </IconSlot>
            <Text w={80} size={42} line={46} color="#dcdcdc">功能</Text>
            <ActionDot />
          </Action>
        </Actions>
        <HomeBar />
      </BottomBar>

      <XueqiuMark>
        <XueqiuLogo />
        <Text w={316} ml={10} mt={2} size={43} color="#b5b5b5" family={FONT_TC} shadow>雪球：158850陈</Text>
      </XueqiuMark>
      <SinaMark>
        <SinaLogo>
          <SinaWord>sina</SinaWord>
          <SinaEye />
        </SinaLogo>
        <Text w={194} ml={12} mt={34} size={26} spacing={8} weight={500} color="#fff" shadow>新浪财经社区</Text>
      </SinaMark>
    </Page>
  );
}
